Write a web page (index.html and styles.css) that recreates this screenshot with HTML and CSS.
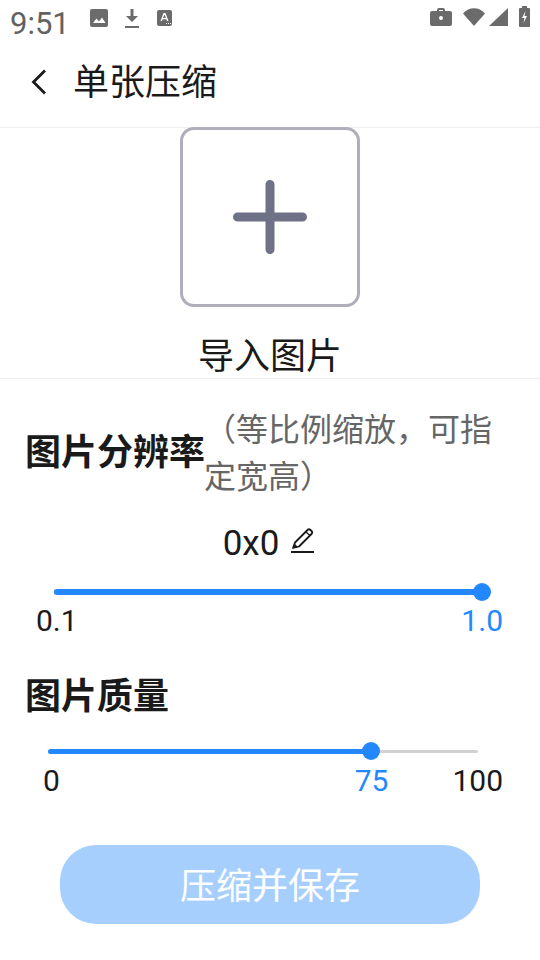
FILE: index.html
```html
<!DOCTYPE html>
<html lang="zh">
<head>
<meta charset="utf-8">
<title>单张压缩</title>
<link rel="stylesheet" href="styles.css">
</head>
<body>
<div class="status">
  <span class="time">9:51</span>
  <svg class="si s-img" viewBox="0 0 18 18"><path fill="#6b6b6b" d="M2 0h14a2 2 0 0 1 2 2v14a2 2 0 0 1-2 2H2a2 2 0 0 1-2-2V2a2 2 0 0 1 2-2z"/><path fill="#fff" d="M3 14l3.500-4.500 2.500 3 3-4 3.500 5.500z"/></svg>
  <svg class="si s-dl" viewBox="0 0 16 20"><path fill="#6b6b6b" d="M6.500 0h3v7H14l-6 6-6-6h4.500zM1 17h14v2H1z"/></svg>
  <svg class="si s-a" viewBox="0 0 16 17"><rect width="15" height="16" rx="2" fill="#6b6b6b"/><path fill="#fff" d="M6.500 3h2l3 8H10l-.6-1.700H5.600L5 11H3.500zM6 8h3L7.500 4.500zM9 13h1v1H9zM11 13h1v1h-1zM13 13h1v1h-1z"/></svg>
  <span class="status-gap"></span>
  <svg class="si s-case" viewBox="0 0 22 18"><path fill="#6b6b6b" d="M7 3V2a2 2 0 0 1 2-2h4a2 2 0 0 1 2 2v1h5a2 2 0 0 1 2 2v11a2 2 0 0 1-2 2H2a2 2 0 0 1-2-2V5a2 2 0 0 1 2-2zm2 0h4V2H9z"/><circle cx="11" cy="10" r="2" fill="#fff"/></svg>
  <svg class="si s-wifi" viewBox="0 0 22 18"><path fill="#6b6b6b" d="M0 5.500C6-1.500 16-1.500 22 5.500L11 18z"/></svg>
  <svg class="si s-sig" viewBox="0 0 19 18"><path fill="#6b6b6b" d="M19 0v18H0z"/></svg>
  <svg class="si s-bat" viewBox="0 0 11 21"><path fill="#6b6b6b" d="M3 0h5v2h2a1 1 0 0 1 1 1v17a1 1 0 0 1-1 1H1a1 1 0 0 1-1-1V3a1 1 0 0 1 1-1h2z"/><path fill="#fff" d="M6.500 5L3 12h2.500l-1 5L8 10H5.500z"/></svg>
</div>

<header class="bar">
  <svg class="back" viewBox="0 0 18 28"><path d="M15 2.500L3.500 14 15 25.500" fill="none" stroke="#1a1a1a" stroke-width="2.800"/></svg>
  <h1 class="title">单张压缩</h1>
</header>

<section class="import">
  <div class="drop">
    <svg class="plus" viewBox="0 0 76 76"><path d="M38 5.500v65M5.500 38h65" fill="none" stroke="#6f7186" stroke-width="9" stroke-linecap="round"/></svg>
  </div>
  <div class="import-label">导入图片</div>
</section>

<section class="settings">
  <div class="res-head">
    <h2 class="sec-title res-title">图片分辨率</h2>
    <p class="note">（等比例缩放，可指定宽高）</p>
  </div>
  <div class="size">
    <span>0x0</span>
    <svg class="pen" viewBox="0 0 24 26"><path d="M2 21L4 15.500 16.500 3Q18 1.500 19.500 3L20.500 4Q22 5.500 20.500 7L8 19.500Z" fill="none" stroke="#1a1a1a" stroke-width="1.800" stroke-linejoin="round"/><path d="M2 21L3.500 16.500 7 20Z" fill="#1a1a1a"/><path d="M15 5l4 3.500" stroke="#1a1a1a" stroke-width="1.300"/><path d="M0 25h23" stroke="#1a1a1a" stroke-width="2"/></svg>
  </div>
  <div class="slider s1">
    <div class="track"><div class="fill" style="width:100%"></div><span class="thumb"></span></div>
  </div>
  <div class="labels l1"><span>0.1</span><span class="blue">1.0</span></div>

  <h2 class="sec-title q-title">图片质量</h2>
  <div class="slider s2">
    <div class="track"><div class="fill" style="width:75%"></div><span class="thumb"></span></div>
  </div>
  <div class="labels l2"><span>0</span><span class="blue val">75</span><span class="max">100</span></div>

  <button class="save" type="button">压缩并保存</button>
</section>
</body>
</html>
```
FILE: styles.css
```css
* { box-sizing: border-box; }
html, body { margin: 0; padding: 0; }
body {
  width: 540px;
  height: 960px;
  overflow: hidden;
  background: #fff;
  color: #1a1a1a;
  font-family: Roboto, "Noto Sans CJK SC", sans-serif;
}
.status {
  height: 40px;
  display: flex;
  align-items: flex-start;
  padding: 0 10px;
}
.time { font-size: 31px; line-height: 48px; color: #626262; width: 59px; }
.si { flex: none; display: block; }
.s-img { width: 18px; height: 18px; margin: 9px 0 0 21px; }
.s-dl { width: 16px; height: 20px; margin: 9px 0 0 16px; }
.s-a { width: 16px; height: 17px; margin: 10px 0 0 17px; }
.status-gap { flex: 1; }
.s-case { width: 22px; height: 18px; margin: 8px 0 0 0; }
.s-wifi { width: 22px; height: 18px; margin: 8px 0 0 11px; }
.s-sig { width: 19px; height: 18px; margin: 8px 0 0 4px; }
.s-bat { width: 11px; height: 21px; margin: 6px 0 0 11px; }

.bar {
  height: 88px;
  display: flex;
  align-items: center;
  padding: 0 0 2px 30px;
  border-bottom: 1px solid #eeeeee;
}
.back { width: 18px; height: 28px; margin-bottom: 2px; }
.title { margin: 0 0 0 25px; font-size: 36px; font-weight: 400; line-height: 50px; }

.import {
  height: 252px;
  display: flex;
  flex-direction: column;
  align-items: center;
  border-bottom: 1px solid #eeeeee;
  margin-top: -1px;
}
.drop {
  flex: none;
  width: 180px;
  height: 180px;
  border: 3px solid #aeafba;
  border-radius: 14px;
  display: flex;
  align-items: center;
  justify-content: center;
  background: #fff;
}
.plus { width: 76px; height: 76px; }
.import-label { margin-top: 29px; font-size: 36px; line-height: 42px; }

.settings { padding: 28px 0 0; }
.res-head { display: flex; align-items: center; padding: 0 36px 0 25px; }
.sec-title { margin: 0; font-size: 36px; font-weight: 700; line-height: 50px; color: #1a1a1a; }
.res-title { flex: none; margin-bottom: 2px; }
.note { margin: 0 0 0 -1px; flex: 1; font-size: 32px; line-height: 47px; color: #666; }
.size {
  margin-top: 17px;
  height: 50px;
  display: flex;
  align-items: center;
  justify-content: center;
  gap: 12px;
  padding-right: 2px;
  font-size: 35px;
}
.pen { width: 24px; height: 26px; margin-bottom: 6px; }
.slider { height: 18px; display: flex; align-items: center; }
.s1 { margin: 15px 58px 0 54px; }
.s2 { margin: 20px 62px 0 48px; }
.track { position: relative; flex: 1; height: 3px; background: #d2d2d2; border-radius: 2px; }
.fill { position: absolute; left: 0; top: -1px; height: 5px; background: #2388ff; border-radius: 3px; }
.s1 .track { height: 6px; }
.s1 .fill { top: 0; height: 6px; }
.thumb {
  position: absolute;
  top: 50%;
  width: 18px;
  height: 18px;
  margin: -9px 0 0 -9px;
  border-radius: 50%;
  background: #2388ff;
}
.s1 .thumb { left: 100%; }
.s2 .thumb { left: 75%; }
.labels { display: flex; font-size: 30px; line-height: 40px; }
.l1 { justify-content: space-between; padding: 0 37px 0 36px; }
.l2 { padding: 0 37px 0 43px; margin-top: 1px; }
.blue { color: #2388ff; }
.val { margin-left: auto; }
.max { margin-left: 64px; }
.q-title { margin: 31px 0 0 25px; }
.save {
  display: block;
  width: 420px;
  height: 79px;
  margin: 44px auto 0;
  border: 0;
  border-radius: 36px;
  background: #a7cffe;
  color: #fff;
  font-family: inherit;
  font-size: 36px;
  padding: 0 0 3px;
}
```
